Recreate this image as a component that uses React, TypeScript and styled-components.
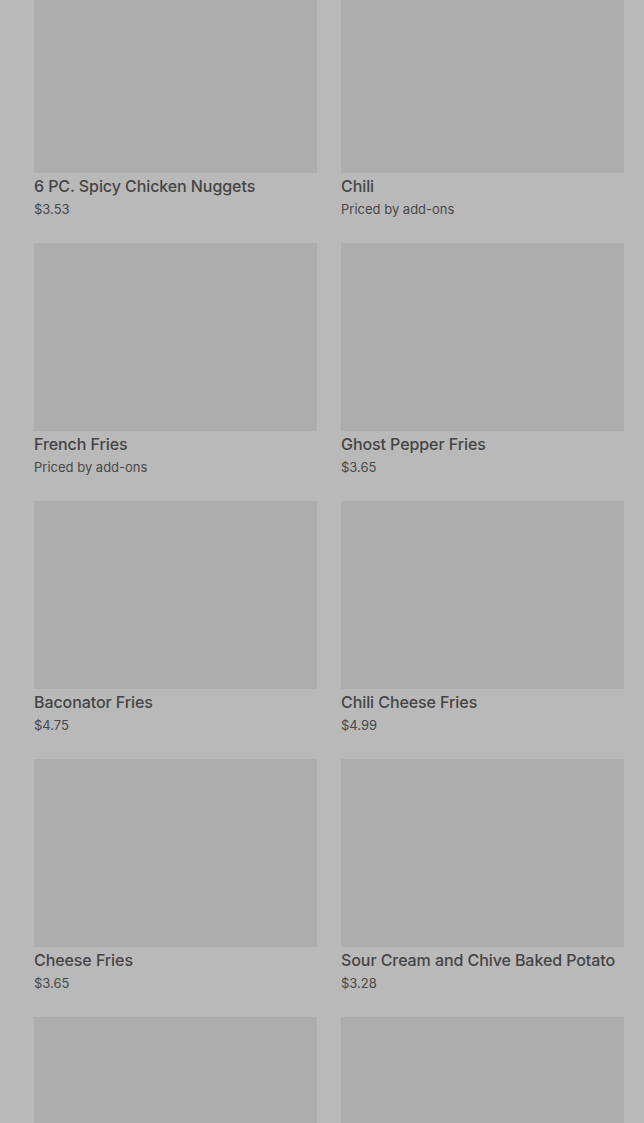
import styled, { createGlobalStyle } from "styled-components";

const GlobalStyle = createGlobalStyle`
  html, body {
    margin: 0;
    padding: 0;
    background: #b9b9b9;
  }
  body {
    font-family: Inter, "Noto Sans", sans-serif;
    color: #444444;
  }
`;

interface Item {
  name: string;
  price: string;
}

const items: Item[] = [
  { name: "6 PC. Spicy Chicken Nuggets", price: "$3.53" },
  { name: "Chili", price: "Priced by add-ons" },
  { name: "French Fries", price: "Priced by add-ons" },
  { name: "Ghost Pepper Fries", price: "$3.65" },
  { name: "Baconator Fries", price: "$4.75" },
  { name: "Chili Cheese Fries", price: "$4.99" },
  { name: "Cheese Fries", price: "$3.65" },
  { name: "Sour Cream and Chive Baked Potato", price: "$3.28" },
  { name: "", price: "" },
  { name: "", price: "" },
];

export default function App() {
  return (
    <>
      <GlobalStyle />
      <Viewport>
        <Grid>
          {items.map((item, i) => (
            <Card key={i}>
              <Photo />
              <Name>{item.name}</Name>
              <Price>{item.price}</Price>
            </Card>
          ))}
        </Grid>
      </Viewport>
    </>
  );
}

const Viewport = styled.div`
  width: 644px;
  height: 1123px;
  overflow: hidden;
  background: #b9b9b9;
`;

const Grid = styled.div`
  display: grid;
  grid-template-columns: 283px 283px;
  column-gap: 24px;
  row-gap: 22px;
  margin-top: -15px;
  padding-left: 34px;
`;

const Card = styled.div`
  display: flex;
  flex-direction: column;
  height: 236px;
`;

const Photo = styled.div`
  height: 188px;
  background: #adadad;
`;

const Name = styled.div`
  margin-top: 3px;
  font-size: 16px;
  font-weight: 500;
  line-height: 20px;
  letter-spacing: -0.08px;
  white-space: nowrap;
  color: #454545;
`;

const Price = styled.div`
  margin-top: 5px;
  font-size: 13px;
  line-height: 17px;
  color: #484848;
`;
